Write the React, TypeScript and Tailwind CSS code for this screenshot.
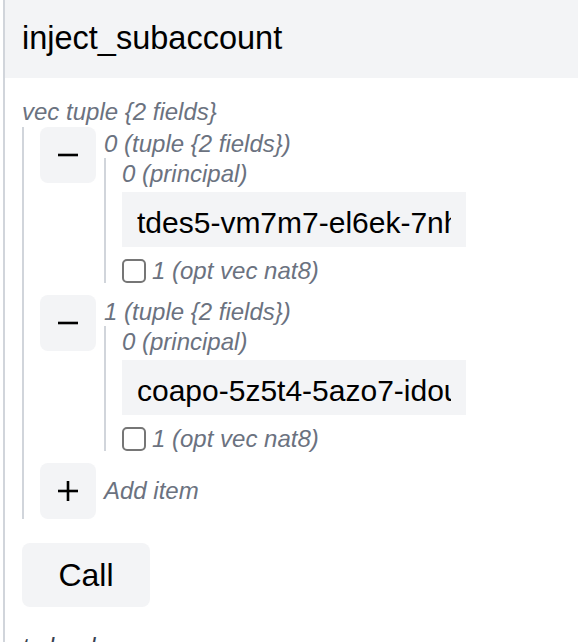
const font = { fontFamily: '"Liberation Sans", Arial, Helvetica, sans-serif' };

const label = "text-[24px] leading-[28px] italic text-[#6b7280]";

function IconButton({ kind }: { kind: "minus" | "plus" }) {
  return (
    <button className="flex h-[56px] w-[56px] shrink-0 items-center justify-center rounded-[8px] bg-[#f3f4f6]">
      <svg width="22" height="22" viewBox="0 0 22 22">
        <line x1="1" y1="11" x2="21" y2="11" stroke="#000" strokeWidth="2.6" />
        {kind === "plus" && <line x1="11" y1="1" x2="11" y2="21" stroke="#000" strokeWidth="2.6" />}
      </svg>
    </button>
  );
}

function TupleItem({ index, value }: { index: number; value: string }) {
  return (
    <div className="flex gap-[8px]">
      <IconButton kind="minus" />
      <div className="flex flex-col">
        <div className={`${label} pt-[3px]`}>{index} (tuple {"{"}2 fields{"}"})</div>
        <div className="flex flex-col border-l-2 border-[#d1d5db] pl-[16px]">
          <div className={`${label} pt-[2px]`}>0 (principal)</div>
          <input
            readOnly
            defaultValue={value}
            className="mt-[4px] h-[55px] w-[344px] bg-[#f3f4f6] px-[15px] pt-[6px] text-[30px] text-black outline-none"
            style={font}
          />
          <div className="mt-[12px] flex h-[24px] items-center gap-[6px]">
            <span className="h-[24px] w-[24px] rounded-[5px] border-2 border-[#767676] bg-white" />
            <span className={label}>1 (opt vec nat8)</span>
          </div>
        </div>
      </div>
    </div>
  );
}

export default function App() {
  return (
    <div className="h-[642px] overflow-hidden bg-white" style={font}>
      <div className="ml-[3px] flex h-full flex-col border-l-2 border-[#d1d5db]">
        <div className="bg-[#f3f4f6] pl-[17px] pt-[20px] pb-[22px] text-[32.5px] leading-[36px] text-black">
          inject_subaccount
        </div>
        <div className="flex flex-col pl-[17px] pt-[20px]">
          <div className={label}>vec tuple {"{"}2 fields{"}"}</div>
          <div className="mt-[1px] flex flex-col gap-[12px] border-l-2 border-[#d1d5db] pl-[16px]">
            <TupleItem index={0} value="tdes5-vm7m7-el6ek-7nhe3-mqe" />
            <TupleItem index={1} value="coapo-5z5t4-5azo7-idoum-a5e" />
            <div className="flex items-center gap-[8px]">
              <IconButton kind="plus" />
              <span className={label}>Add item</span>
            </div>
          </div>
          <button className="mt-[24px] flex h-[64px] w-[128px] items-center justify-center rounded-[8px] bg-[#f3f4f6] text-[32px] text-black">
            Call
          </button>
          <div className="mt-[26px] text-[24px] leading-[28px] italic text-[#374151]">to be done</div>
        </div>
      </div>
    </div>
  );
}
